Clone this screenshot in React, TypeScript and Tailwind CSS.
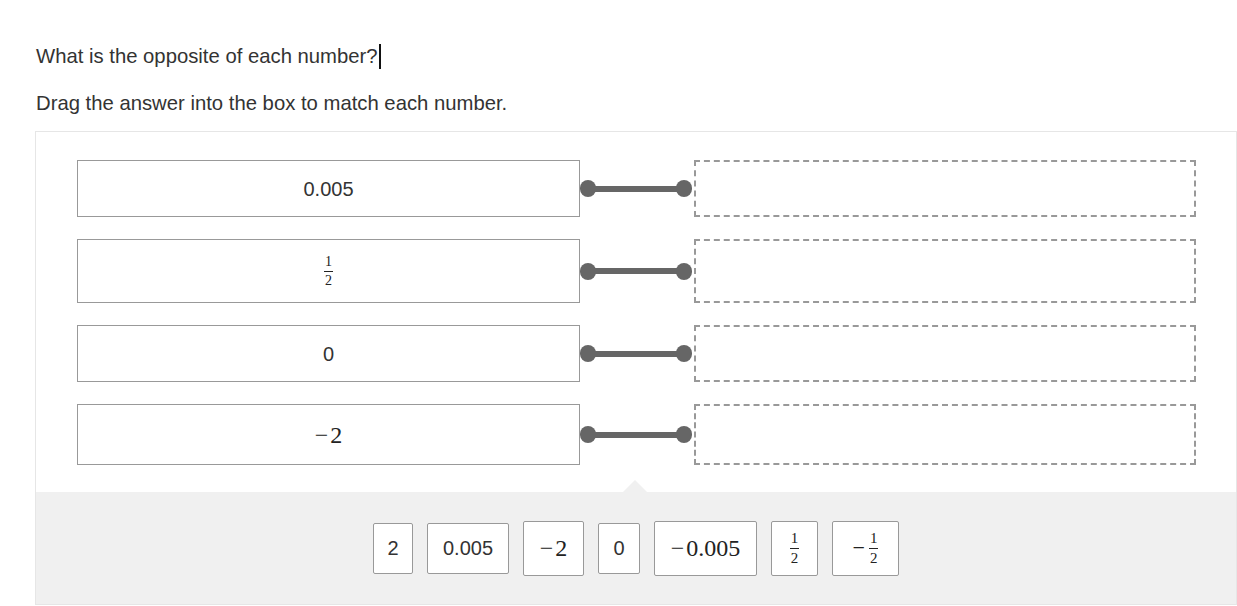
import React from 'react';

function Frac({ minus = false, size = 'text-[15px]' }: { minus?: boolean; size?: string }) {
  return (
    <span className="inline-flex items-center font-['Liberation_Serif'] text-[#222]">
      {minus && <span className="text-[22px] mr-[4px] leading-none">−</span>}
      <span className={`inline-flex flex-col items-center leading-none ${size}`}>
        <span className="px-[1px]">1</span>
        <span className="w-full h-px bg-[#222] my-[2px]" />
        <span className="px-[1px]">2</span>
      </span>
    </span>
  );
}

function Neg({ value }: { value: string }) {
  return (
    <span className="font-['Liberation_Serif'] text-[24px] text-[#222] leading-none">
      <span className="mr-[2px]">−</span>
      {value}
    </span>
  );
}

interface Row {
  height: string;
  content: React.ReactNode;
}

const rows: Row[] = [
  { height: 'h-[57px]', content: <span className="text-[20px]">0.005</span> },
  { height: 'h-[64px]', content: <Frac size="text-[14px]" /> },
  { height: 'h-[57px]', content: <span className="text-[20px]">0</span> },
  { height: 'h-[61px]', content: <Neg value="2" /> },
];

const tiles: { w: string; h: string; content: React.ReactNode }[] = [
  { w: 'w-[40px]', h: 'h-[51px]', content: <span className="text-[20px]">2</span> },
  { w: 'w-[82px]', h: 'h-[51px]', content: <span className="text-[20px]">0.005</span> },
  { w: 'w-[61px]', h: 'h-[55px]', content: <Neg value="2" /> },
  { w: 'w-[42px]', h: 'h-[51px]', content: <span className="text-[20px]">0</span> },
  { w: 'w-[103px]', h: 'h-[55px]', content: <Neg value="0.005" /> },
  { w: 'w-[47px]', h: 'h-[55px]', content: <Frac /> },
  { w: 'w-[67px]', h: 'h-[55px]', content: <Frac minus /> },
];

function Connector() {
  return (
    <div className="w-[114px] flex items-center shrink-0">
      <span className="w-[16px] h-[17px] rounded-full bg-[#666] shrink-0" />
      <span className="flex-1 h-[6px] bg-[#666] -mx-[2px]" />
      <span className="w-[16px] h-[17px] rounded-full bg-[#666] shrink-0" />
      <span className="w-[2px] shrink-0" />
    </div>
  );
}

export default function App() {
  return (
    <div className="w-[1237px] h-[606px] bg-white overflow-hidden font-['Liberation_Sans',Arial,sans-serif] text-[#333]">
      <div className="pl-[36px] pt-[42px]">
        <p className="text-[20.3px] leading-[28px] flex items-center">
          What is the opposite of each number?
          <span className="inline-block w-[2px] h-[25px] bg-[#111] ml-[1px]" />
        </p>
        <p className="text-[20.3px] leading-[28px] mt-[19px]">
          Drag the answer into the box to match each number.
        </p>
      </div>

      <div className="ml-[35px] mt-[14px] border border-[#e6e6e6]">
        <div className="pl-[41px] pt-[28px] pb-[27px] flex flex-col gap-[22px]">
          {rows.map((r, i) => (
            <div key={i} className="flex items-center">
              <div
                className={`w-[503px] ${r.height} border border-[#999] flex items-center justify-center shrink-0`}
              >
                {r.content}
              </div>
              <Connector />
              <div className={`w-[502px] ${r.height} border-2 border-dashed border-[#999] shrink-0`} />
            </div>
          ))}
        </div>

        <div className="relative bg-[#f0f0f0] h-[112px] flex items-center justify-center gap-[14px]">
          <span className="absolute -top-[12px] left-[587px] w-0 h-0 border-l-[12px] border-r-[12px] border-b-[12px] border-l-transparent border-r-transparent border-b-[#f0f0f0]" />
          {tiles.map((t, i) => (
            <div
              key={i}
              className={`${t.w} ${t.h} bg-white border border-[#999] rounded-[2px] flex items-center justify-center`}
            >
              {t.content}
            </div>
          ))}
        </div>
      </div>
    </div>
  );
}
